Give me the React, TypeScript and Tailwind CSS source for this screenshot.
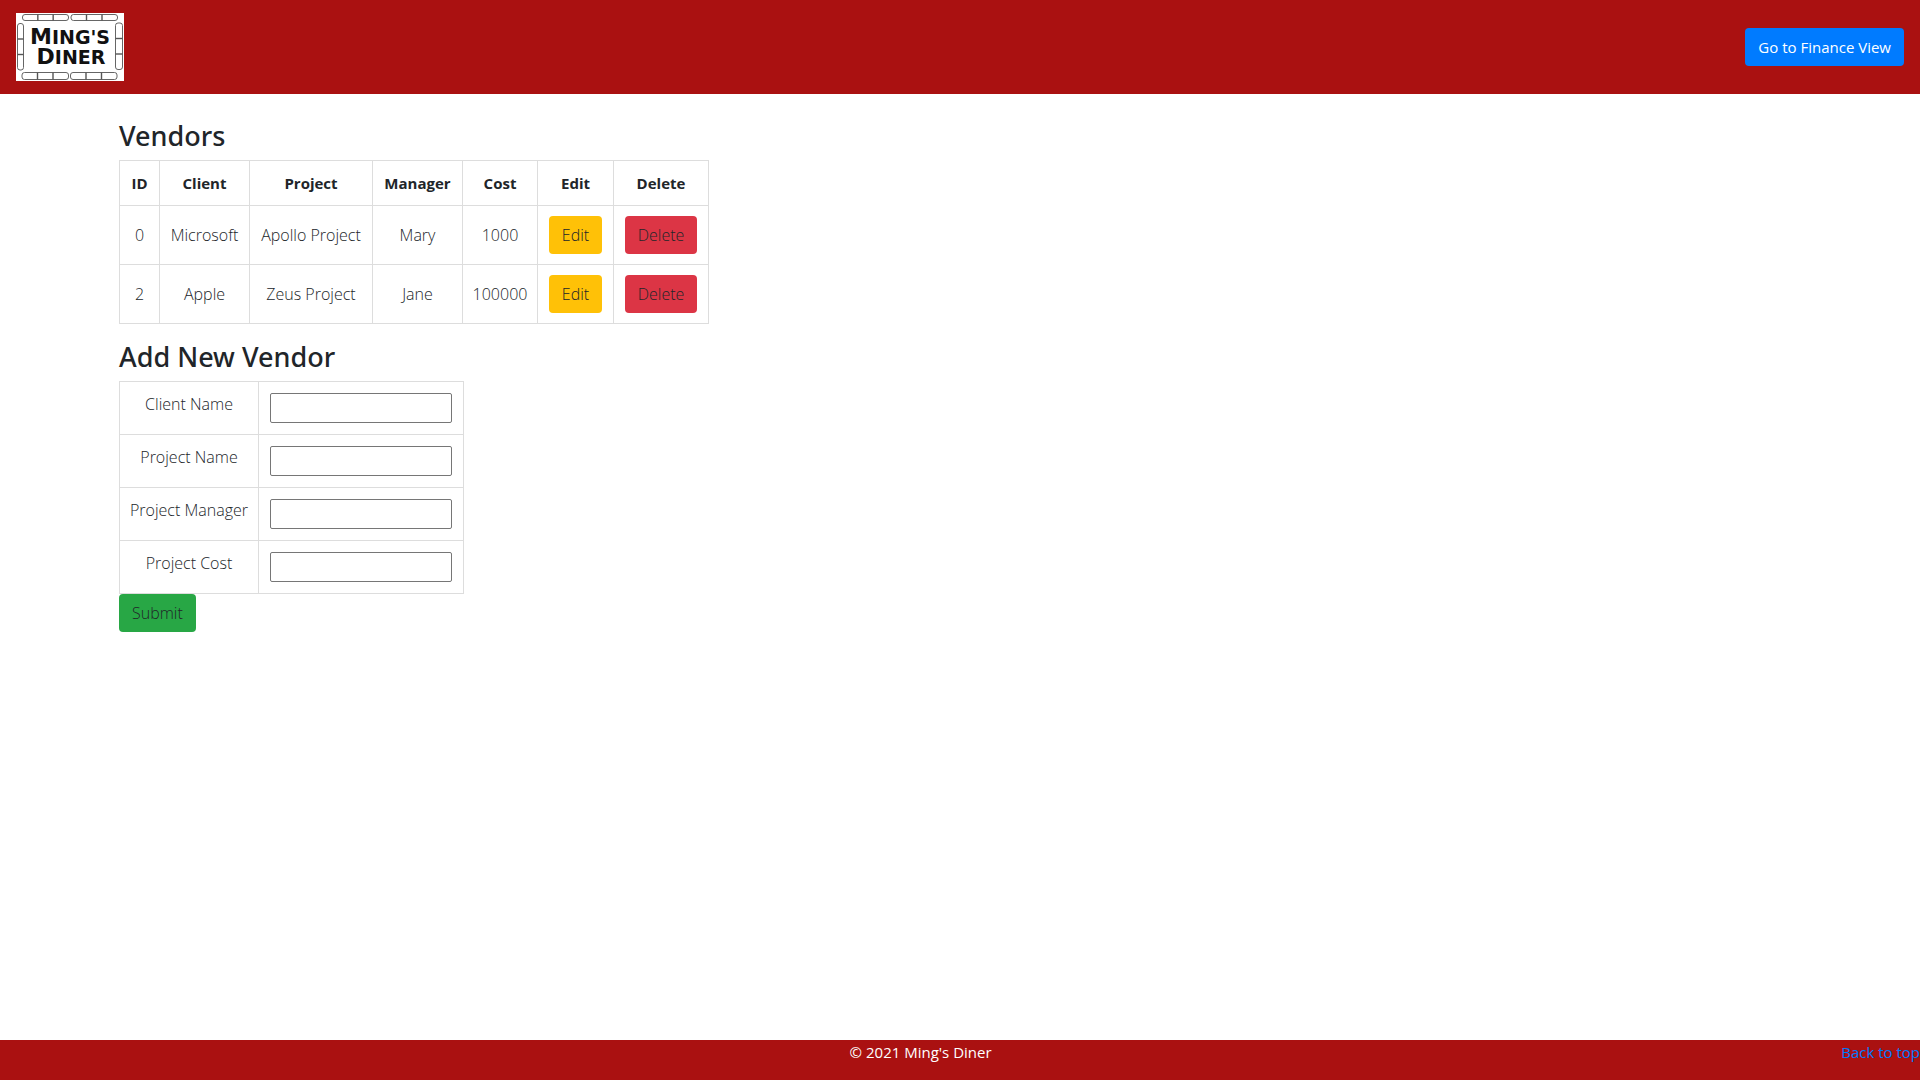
import React from "react";

const vendors = [
  { id: 0, client: "Microsoft", project: "Apollo Project", manager: "Mary", cost: 1000 },
  { id: 2, client: "Apple", project: "Zeus Project", manager: "Jane", cost: 100000 },
];

const columns = [
  { label: "ID", width: "w-[40px]" },
  { label: "Client", width: "w-[90px]" },
  { label: "Project", width: "w-[123px]" },
  { label: "Manager", width: "w-[90px]" },
  { label: "Cost", width: "w-[75px]" },
  { label: "Edit", width: "w-[76px]" },
  { label: "Delete", width: "w-[95px]" },
];

const fields = [
  { id: "client-name", label: "Client Name" },
  { id: "project-name", label: "Project Name" },
  { id: "project-manager", label: "Project Manager" },
  { id: "project-cost", label: "Project Cost" },
];

const cell = "border border-[#dddddd] py-[10px] text-center whitespace-nowrap";
const button = "h-[38px] rounded px-[13px] leading-6 whitespace-nowrap";
const heading = "mb-2 font-['Noto_Sans','Open_Sans',sans-serif] text-[27px] font-medium";

function Stick({ x, y, w, h }: { x: number; y: number; w: number; h: number }) {
  const wide = w > h;
  return (
    <g>
      <rect x={x} y={y} width={w} height={h} rx={2.5} />
      {[1 / 3, 2 / 3].map((f) =>
        wide ? (
          <path key={f} d={`M${x + w * f} ${y}v${h}`} strokeWidth={1.4} />
        ) : (
          <path key={f} d={`M${x} ${y + h * f}h${w}`} strokeWidth={1.4} />
        )
      )}
    </g>
  );
}

function Logo() {
  return (
    <svg width="108" height="68" viewBox="0 0 108 68" role="img" aria-label="Ming's Diner">
      <rect width="108" height="68" fill="#fff" />
      <g fill="#fff" stroke="#555" strokeWidth={0.9}>
        <Stick x={6.5} y={1.5} w={46} h={6} />
        <Stick x={55} y={1.5} w={46.5} h={6} />
        <Stick x={6} y={59.5} w={46.5} h={7} />
        <Stick x={54.5} y={59.5} w={46.5} h={7} />
        <Stick x={1.5} y={10.5} w={6} h={46.5} />
        <Stick x={99.5} y={10} w={7} h={46.5} />
      </g>
      <g fill="#111" textAnchor="middle" className="font-bold" fontFamily="'DejaVu Sans', sans-serif">
        <text x="54" y="31" fontSize="22">
          M<tspan fontSize="19">ING'S</tspan>
        </text>
        <text x="55" y="51" fontSize="22">
          D<tspan fontSize="19">INER</tspan>
        </text>
      </g>
    </svg>
  );
}

export default function App() {
  return (
    <div className="flex min-h-screen flex-col bg-white font-['Open_Sans',sans-serif] text-[15px] leading-6 text-[#212529]">
      <header className="flex items-center justify-between bg-[#aa1111] px-4 py-[13px]">
        <a href="#home">
          <Logo />
        </a>
        <button type="button" className={`${button} bg-[#007bff] text-white`}>
          Go to Finance View
        </button>
      </header>

      <main className="flex-1 pt-[25px] pl-[119px] text-base font-[350]">
        <h3 className={`${heading} leading-[33px]`}>Vendors</h3>
        <table className="w-[590px] table-fixed border-collapse">
          <thead className="text-[15px]">
            <tr>
              {columns.map((c) => (
                <th key={c.label} scope="col" className={`${cell} ${c.width} leading-6 font-bold`}>
                  {c.label}
                </th>
              ))}
            </tr>
          </thead>
          <tbody>
            {vendors.map((v) => (
              <tr key={v.id}>
                <td className={cell}>{v.id}</td>
                <td className={cell}>{v.client}</td>
                <td className={cell}>{v.project}</td>
                <td className={cell}>{v.manager}</td>
                <td className={cell}>{v.cost}</td>
                <td className={cell}>
                  <button type="button" className={`${button} mx-auto block bg-[#ffc107]`}>
                    Edit
                  </button>
                </td>
                <td className={cell}>
                  <button type="button" className={`${button} mx-auto block bg-[#dc3545]`}>
                    Delete
                  </button>
                </td>
              </tr>
            ))}
          </tbody>
        </table>

        <form>
          <h3 className={`${heading} mt-4 leading-[33px]`}>Add New Vendor</h3>
          <table className="w-[345px] table-fixed border-collapse">
            <tbody>
              {fields.map((f) => (
                <tr key={f.id}>
                  <td className={`${cell} w-[139px] align-top`}>
                    <label htmlFor={f.id}>{f.label}</label>
                  </td>
                  <td className={`${cell} w-[205px]`}>
                    <input
                      id={f.id}
                      type="text"
                      className="mx-auto my-px block h-[30px] w-[182px] rounded-[2px] border border-[#767676] px-1"
                    />
                  </td>
                </tr>
              ))}
            </tbody>
          </table>
          <button type="submit" className={`${button} block bg-[#28a745]`}>
            Submit
          </button>
        </form>
      </main>

      <footer className="flex h-10 items-start bg-[#aa1111] text-white">
        <p className="flex-1 text-center">© 2021 Ming's Diner</p>
        <a href="#top" className="text-[#007bff]">
          Back to top
        </a>
      </footer>
    </div>
  );
}
